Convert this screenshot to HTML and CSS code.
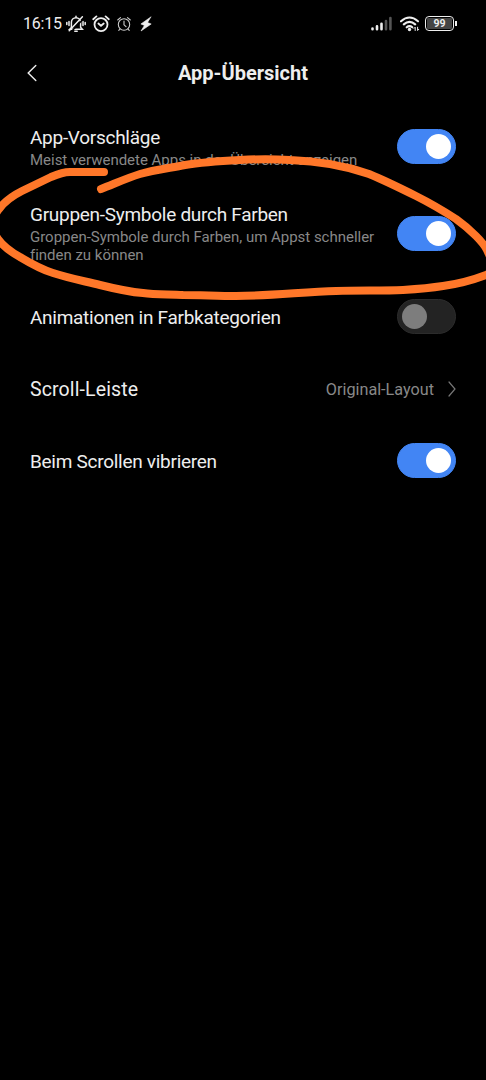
FILE: index.html
```html
<!DOCTYPE html>
<html lang="de">
<head>
  <meta charset="UTF-8" />
  <meta name="viewport" content="width=device-width, initial-scale=1" />
  <title>App-Übersicht</title>
  <link rel="stylesheet" href="styles.css">
</head>
<body>
  <div class="statusbar">
    <span class="time">16:15</span>
    <svg class="bell" width="20" height="18" viewBox="0 0 20 18">
      <path d="M5.4 12.5V7.300a4.600 4.600 0 0 1 9.200 0v5l1.700 1.900H3.700zM10 1.200v1.500" />
      <path d="M8.800 16.200h2.400M3 6.500v4M.8 7.500v2M17 6.500v4M19.200 7.500v2" />
      <path class="cut" d="M5 17L18.200 3" />
      <path d="M3.200 15.800L16.400 1.800" />
    </svg>
    <svg class="alarm" width="18" height="18" viewBox="0 0 18 18">
      <circle cx="9" cy="9.6" r="6.5" />
      <path d="M6.4 8.5L9 10.800l2.700-2.300M1.200 4.200l3.200-2.800M16.800 4.200l-3.200-2.800" />
    </svg>
    <svg class="alarm-thin" width="14" height="16" viewBox="0 0 14 16">
      <circle cx="7" cy="8.5" r="5.7" />
      <path d="M7 5v3.800l2 1.900M.7 4l2.800-2.400M13.300 4l-2.800-2.400M3 13l-1.200 1.400M11 13l1.200 1.400" />
    </svg>
    <svg class="bolt" width="12" height="16" viewBox="0 0 12 16">
      <path d="M10.800 1L.9 8l3.500 1.400L1 15l10.200-7-3.500-1.400z" />
    </svg>
    <div class="right">
      <svg class="signal" width="22" height="15" viewBox="0 0 22 15">
        <path d="M1.500 12.600v.6M6 10.400v2.800M10.500 7.800v5.400" />
        <path class="dim" d="M15 5v8.200M19.400 2v11.200" />
      </svg>
      <svg class="wifi" width="20" height="16" viewBox="0 0 20 16">
        <path d="M1 5.300Q9.500-2.300 18 5.300M3.800 8.400q5.700-5 11.400 0M6.700 11.300q2.800-2.400 5.600 0" />
        <circle cx="9.5" cy="13.5" r="1.7" />
        <path class="arrows" d="M15.200 14.500v-3.300l-1.200 1.200M17.600 11.200v3.300l1.200-1.200" />
      </svg>
      <div class="battery"><span>99</span></div>
    </div>
  </div>

  <header class="header">
    <svg class="back" width="10" height="18" viewBox="0 0 10 18">
      <path d="M8.800 1.500L1.200 9l7.600 7.500" />
    </svg>
    <h1>App-Übersicht</h1>
  </header>

  <main class="settings">
    <div class="row row-sub">
      <div class="label">
        <h2>App-Vorschläge</h2>
        <p>Meist verwendete Apps in der Übersicht anzeigen</p>
      </div>
      <div class="toggle on"></div>
    </div>
    <div class="row row-long">
      <div class="label">
        <h2>Gruppen-Symbole durch Farben</h2>
        <p>Groppen-Symbole durch Farben, um Appst schneller finden zu können</p>
      </div>
      <div class="toggle on"></div>
    </div>
    <div class="row">
      <h2>Animationen in Farbkategorien</h2>
      <div class="toggle"></div>
    </div>
    <div class="row">
      <h2 class="wide">Scroll-Leiste</h2>
      <div class="value">
        <span>Original-Layout</span>
        <svg width="8" height="16" viewBox="0 0 8 16">
          <path d="M1 1l6 7-6 7" />
        </svg>
      </div>
    </div>
    <div class="row">
      <h2>Beim Scrollen vibrieren</h2>
      <div class="toggle on"></div>
    </div>
  </main>

  <!-- hand drawn marker around the second setting -->
  <svg class="marker" width="486" height="1080" viewBox="0 0 486 1080">
    <path d="M104 172H70C64 172 58 174 51 177L22 191C12 196 5 201 -1 209C-9 219 -9 229 -2 239C3 246 11 252 20 257C30 263 40 269 53 273C68 278 84 281 100 285C116 289 130 292 143 293C156 295 170 294 183 295C200 295 218 296 236 296C270 296 303 292 336 291C358 290 381 291 403 290C418 289 430 288 443 286C458 284 473 280 486 275C497 270 493 263 487 250C484 244 480 240 476 236C470 230 463 224 456 219C442 210 430 203 416 196C400 188 386 181 369 174C346 166 320 161 290 160C274 159 257 159 240 160C221 161 203 162 185 165C170 168 154 170 140 174C127 178 114 184 101 189" />
  </svg>
</body>
</html>
```

FILE: styles.css
```css
* {
  box-sizing: border-box;
}
body {
  margin: 0;
  min-height: 1080px;
  background: #000;
  color: #eee;
  font-family: Roboto, sans-serif;
  overflow: hidden;
}
h1, h2, p {
  margin: 0;
}
svg {
  fill: none;
  stroke: #eee;
  stroke-linecap: round;
  flex-shrink: 0;
}

/* status bar */
.statusbar {
  height: 46px;
  padding: 1px 30px 0 23px;
  display: flex;
  align-items: center;
}
.time {
  width: 39px;
  font-size: 16px;
  letter-spacing: -0.2px;
  white-space: nowrap;
}
.bell {
  margin-left: 4px;
  stroke-width: 1.5;
}
.bell .cut {
  stroke: #000;
}
.alarm {
  margin-left: 6px;
  stroke-width: 1.8;
}
.alarm-thin {
  margin-left: 7px;
  stroke: #ccc;
  stroke-width: 1.1;
}
.bolt {
  margin-left: 9px;
  fill: #eee;
  stroke: #eee;
  stroke-width: 0.6;
}
.right {
  margin-left: auto;
  display: flex;
  align-items: center;
}
.signal {
  stroke-width: 2.6;
}
.signal .dim {
  stroke: #555;
}
.wifi {
  margin: 0 5px 0 7px;
  stroke-width: 2.1;
}
.wifi circle {
  fill: #eee;
  stroke: none;
}
.wifi .arrows {
  stroke-width: 1;
}
.battery {
  position: relative;
  width: 29px;
  height: 15px;
  margin-right: 2px;
  padding: 1px;
  border: 1.6px solid #eee;
  border-width: 1.6px;
  border-radius: 4px;
}
.battery span {
  display: block;
  height: 11px;
  border-radius: 1px;
  background: #444;
  font-size: 10.5px;
  font-weight: bold;
  line-height: 11px;
  text-align: center;
}
.battery::after {
  content: "";
  position: absolute;
  right: -4px;
  top: 4px;
  width: 2px;
  height: 5px;
  background: #eee;
}

/* title */
.header {
  height: 61px;
  padding: 0 30px 8px 27px;
  display: flex;
  align-items: center;
}
.header h1 {
  flex: 1;
  padding-right: 7px;
  text-align: center;
  font-size: 20px;
  font-weight: bold;
}
.back {
  stroke-width: 1.4;
}

/* settings list */
.row {
  height: 72px;
  padding: 0 30px;
  display: flex;
  align-items: center;
  justify-content: space-between;
}
.row-sub {
  height: 79px;
}
.row-long {
  height: 94px;
}
.row h2 {
  padding-top: 3px;
  font-size: 19px;
  font-weight: normal;
  line-height: 24px;
  letter-spacing: -0.28px;
  white-space: nowrap;
}
.row h2.wide {
  font-size: 19.5px;
  letter-spacing: 0.13px;
}
.label {
  width: 352px;
}
.label h2 {
  padding-top: 1px;
}
.label p {
  padding-top: 1px;
  color: #888;
  font-size: 15px;
  line-height: 18px;
  letter-spacing: -0.02px;
}
.toggle {
  width: 59px;
  height: 35px;
  padding: 4px;
  border: 1px solid #2c2c2c;
  border-radius: 18px;
  background: #232323;
  flex-shrink: 0;
}
.toggle::before {
  content: "";
  display: block;
  width: 25px;
  height: 25px;
  border-radius: 50%;
  background: #7d7d7d;
}
.toggle.on {
  background: #4285f4;
  border-color: #4285f4;
}
.toggle.on::before {
  margin-left: auto;
  background: #fff;
}
.value {
  padding-top: 1px;
  display: flex;
  align-items: center;
  gap: 14px;
  color: #888;
  font-size: 16.2px;
}
.value span {
  padding-top: 1px;
}
.value svg {
  stroke: #777;
  stroke-width: 1.2;
}

.marker {
  position: absolute;
  left: 0;
  top: 0;
  stroke: #ff7729;
  stroke-width: 8;
  stroke-linejoin: round;
}
```
